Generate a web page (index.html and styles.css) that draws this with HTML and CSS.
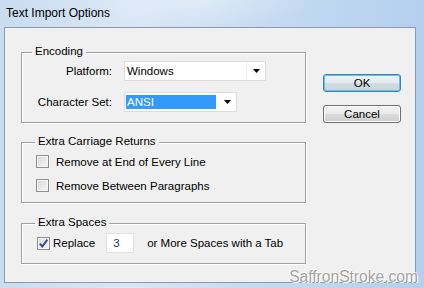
FILE: index.html
```html
<!DOCTYPE html>
<html>
<head>
<meta charset="utf-8">
<title>Text Import Options</title>
<link rel="stylesheet" href="styles.css">
</head>
<body>
<div class="window">
  <div class="titlebar">Text Import Options</div>
  <div class="dialog">
    <div class="groups">
      <section class="group group-encoding">
        <span class="legend legend-near">Encoding</span>
        <div class="field-grid">
          <span class="field-label">Platform:</span>
          <div class="select select-wide">
            <span class="select-value">Windows</span>
            <span class="select-arrow"><svg width="7" height="4" viewBox="0 0 7 4"><polygon points="0,0 7,0 3.5,4" fill="#000"/></svg></span>
          </div>
          <span class="field-label">Character Set:</span>
          <div class="select select-narrow">
            <span class="select-value"><span class="selected">ANSI</span></span>
            <span class="select-arrow"><svg width="7" height="4" viewBox="0 0 7 4"><polygon points="0,0 7,0 3.5,4" fill="#000"/></svg></span>
          </div>
        </div>
      </section>
      <section class="group group-returns">
        <span class="legend">Extra Carriage Returns</span>
        <div class="check-row"><span class="checkbox"></span><span class="check-text">Remove at End of Every Line</span></div>
        <div class="check-row"><span class="checkbox"></span><span class="check-text">Remove Between Paragraphs</span></div>
      </section>
      <section class="group group-spaces">
        <span class="legend">Extra Spaces</span>
        <div class="spaces-row">
          <span class="checkbox checked"><svg width="11" height="11" viewBox="0 0 11 11"><path d="M1.8 5.6 L4.3 8.4 L9.4 1.6" stroke="#3a4d86" stroke-width="1.9" fill="none"/></svg></span>
          <span class="replace-text">Replace</span>
          <span class="num-input">3</span>
          <span class="spaces-text">or More Spaces with a Tab</span>
        </div>
      </section>
    </div>
    <div class="buttons">
      <button class="btn btn-default">OK</button>
      <button class="btn">Cancel</button>
    </div>
  </div>
  <div class="watermark">SaffronStroke.com</div>
</div>
</body>
</html>
```
FILE: styles.css
```css
html, body {
  margin: 0;
  padding: 0;
}
body {
  font-family: "Liberation Sans", Arial, sans-serif;
  font-size: 11.5px;
  color: #000;
}
.window {
  position: relative;
  width: 424px;
  height: 288px;
  overflow: hidden;
  background:
    radial-gradient(ellipse 120px 30px at 200px 0px, rgba(255,255,255,0.35), rgba(255,255,255,0) 100%),
    linear-gradient(to right, #c9dcf0 0%, #d9e7f5 30%, #c6dbf1 60%, #b4d0ee 100%);
}
.titlebar {
  box-sizing: border-box;
  height: 27px;
  padding: 6px 0 0 6px;
  font-size: 12px;
  line-height: 14px;
  color: #000;
}
.dialog {
  box-sizing: border-box;
  width: 412px;
  height: 256px;
  margin-left: 4px;
  border: 1px solid #8c9bab;
  background: #f0f0f0;
  display: flex;
  padding: 24px 0 0 16px;
  gap: 17px;
}
.groups {
  width: 285px;
  display: flex;
  flex-direction: column;
}
.group {
  position: relative;
  box-sizing: border-box;
  width: 285px;
  border: 1px solid #a0a0a0;
  box-shadow: 1px 1px 0 #fff, inset 1px 1px 0 #fff;
}
.group-encoding {
  height: 71px;
  padding: 8px 0 0 14px;
}
.group-returns {
  height: 61px;
  margin-top: 19px;
  padding: 12px 0 0 14px;
}
.group-spaces {
  height: 41px;
  margin-top: 20px;
  padding: 9px 0 0 15px;
}
.legend {
  position: absolute;
  top: -9px;
  left: 13px;
  padding: 0 3px;
  background: #f0f0f0;
  line-height: 14px;
  white-space: nowrap;
}
.legend-near {
  left: 10px;
}
.field-grid {
  display: grid;
  grid-template-columns: 76px auto;
  column-gap: 12px;
  row-gap: 11px;
  align-items: center;
}
.field-label {
  text-align: right;
  white-space: nowrap;
  line-height: 14px;
}
.select {
  box-sizing: border-box;
  height: 20px;
  border: 1px solid #dcdcdc;
  background: #fff;
  display: flex;
}
.select-wide {
  width: 142px;
}
.select-narrow {
  width: 113px;
}
.select-value {
  flex: 1;
  display: flex;
  align-items: center;
  padding-left: 2px;
  border-right: 1px solid #ededed;
  line-height: 14px;
}
.select-narrow .select-value {
  border-right: none;
  padding: 0 0 0 1px;
}
.selected {
  display: block;
  width: 89px;
  height: 14px;
  padding-left: 1px;
  background: #3399ff;
  color: #fff;
  line-height: 14px;
}
.select-arrow {
  width: 18px;
  display: flex;
  align-items: center;
  justify-content: center;
}
.select-arrow svg {
  display: block;
}
.check-row {
  display: flex;
  align-items: center;
  height: 13px;
  gap: 7px;
}
.check-row + .check-row {
  margin-top: 11px;
}
.checkbox {
  box-sizing: border-box;
  width: 13px;
  height: 13px;
  flex: none;
  border: 1px solid #8e8f8f;
  background: linear-gradient(135deg, #d6d6d6 0%, #e8e8e8 50%, #f8f8f8 100%);
  box-shadow: inset 0 0 0 1px #f6f6f6;
  display: flex;
  align-items: center;
  justify-content: center;
}
.checkbox.checked {
  background: linear-gradient(135deg, #dadde3 0%, #f0f2f5 100%);
}
.checkbox svg {
  display: block;
}
.check-text {
  line-height: 14px;
  white-space: nowrap;
}
.spaces-row {
  display: flex;
  align-items: center;
  height: 20px;
}
.replace-text {
  margin-left: 3px;
  line-height: 14px;
}
.num-input {
  box-sizing: border-box;
  width: 28px;
  height: 20px;
  margin-left: 11px;
  padding-left: 6px;
  border: 1px solid #e1e1e1;
  background: #fff;
  color: #1b2f78;
  line-height: 18px;
}
.spaces-text {
  margin-left: 13px;
  line-height: 14px;
  white-space: nowrap;
}
.buttons {
  display: flex;
  flex-direction: column;
  gap: 13px;
  padding-top: 22px;
}
.btn {
  box-sizing: border-box;
  width: 78px;
  height: 18px;
  padding: 0;
  border: 1px solid #707070;
  border-radius: 3px;
  font-family: "Liberation Sans", Arial, sans-serif;
  font-size: 11.5px;
  line-height: 14px;
  color: #000;
  background: linear-gradient(#f3f3f3 0%, #ebebeb 48%, #dcdcdc 52%, #cfcfcf 100%);
  box-shadow: inset 0 0 0 1px #fbfbfb;
}
.btn-default {
  border-color: #3c7fb1;
  background: linear-gradient(#eef3f6 0%, #e3ebf0 48%, #d2dde4 52%, #c8d5dd 100%);
  box-shadow: inset 0 0 0 1px #5cc6f0;
}
.watermark {
  position: absolute;
  right: 6px;
  bottom: 3px;
  font-family: "Liberation Sans", Arial, sans-serif;
  font-size: 15.6px;
  line-height: 16px;
  color: #a3a3a3;
  text-shadow: 1px 1px 0 #fff, -1px 0 0 rgba(255,255,255,0.8), 0 -1px 0 rgba(255,255,255,0.8);
}
```
